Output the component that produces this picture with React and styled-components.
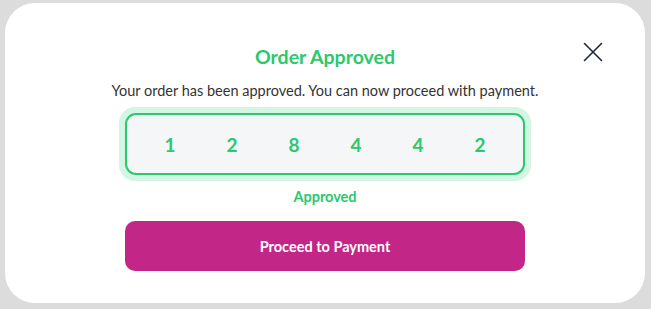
import React from "react";
import styled, { createGlobalStyle } from "styled-components";

const GlobalStyle = createGlobalStyle`
  html, body {
    margin: 0;
    padding: 0;
    background: #dcdcdd;
    font-family: "Lato", "Open Sans", sans-serif;
  }
  * {
    box-sizing: border-box;
  }
`;

const Overlay = styled.div`
  width: 651px;
  height: 309px;
  padding: 3px 6px 6px 5px;
  background: #dcdcdd;
`;

const Card = styled.div`
  position: relative;
  width: 640px;
  height: 300px;
  background: #fff;
  border-radius: 30px;
  display: flex;
  flex-direction: column;
  align-items: center;
  padding-top: 42px;
`;

const CloseButton = styled.button`
  position: absolute;
  top: 36px;
  right: 39px;
  width: 26px;
  height: 26px;
  padding: 0;
  border: none;
  background: transparent;
  cursor: pointer;
  display: flex;
  align-items: center;
  justify-content: center;
`;

const Title = styled.h2`
  margin: 0;
  font-size: 19.5px;
  line-height: 24px;
  font-weight: 700;
  color: #2bc96c;
`;

const Message = styled.p`
  margin: 12px 0 0;
  font-size: 14.5px;
  line-height: 20px;
  color: #333;
`;

const CodeRing = styled.div`
  margin-top: 6px;
  padding: 6px;
  border-radius: 16px;
  background: #d3f5e3;
`;

const CodeBox = styled.div`
  width: 400px;
  height: 62px;
  border: 2px solid #2bc96c;
  border-radius: 11px;
  background: #f4f6f8;
  display: grid;
  grid-template-columns: repeat(6, 62px);
  justify-content: center;
  align-items: center;
`;

const Digit = styled.span`
  text-align: center;
  font-size: 19px;
  font-weight: 700;
  color: #2bc96c;
`;

const Status = styled.div`
  margin-top: 7px;
  font-size: 14.5px;
  line-height: 18px;
  font-weight: 700;
  color: #2bc96c;
`;

const PayButton = styled.button`
  margin-top: 15px;
  width: 400px;
  height: 50px;
  border: none;
  border-radius: 10px;
  background: #c22687;
  color: #fff;
  font-family: inherit;
  font-size: 14.5px;
  font-weight: 700;
  cursor: pointer;
`;

const code = ["1", "2", "8", "4", "4", "2"];

export default function App() {
  return (
    <>
      <GlobalStyle />
      <Overlay>
        <Card>
          <CloseButton type="button" aria-label="Close">
            <svg width="20" height="20" viewBox="0 0 20 20" fill="none">
              <path
                d="M1.5 1.5 L18.5 18.5 M18.5 1.5 L1.5 18.5"
                stroke="#1e2636"
                strokeWidth="1.6"
                strokeLinecap="round"
              />
            </svg>
          </CloseButton>
          <Title>Order Approved</Title>
          <Message>
            Your order has been approved. You can now proceed with payment.
          </Message>
          <CodeRing>
            <CodeBox>
              {code.map((d, i) => (
                <Digit key={i}>{d}</Digit>
              ))}
            </CodeBox>
          </CodeRing>
          <Status>Approved</Status>
          <PayButton type="button">Proceed to Payment</PayButton>
        </Card>
      </Overlay>
    </>
  );
}
